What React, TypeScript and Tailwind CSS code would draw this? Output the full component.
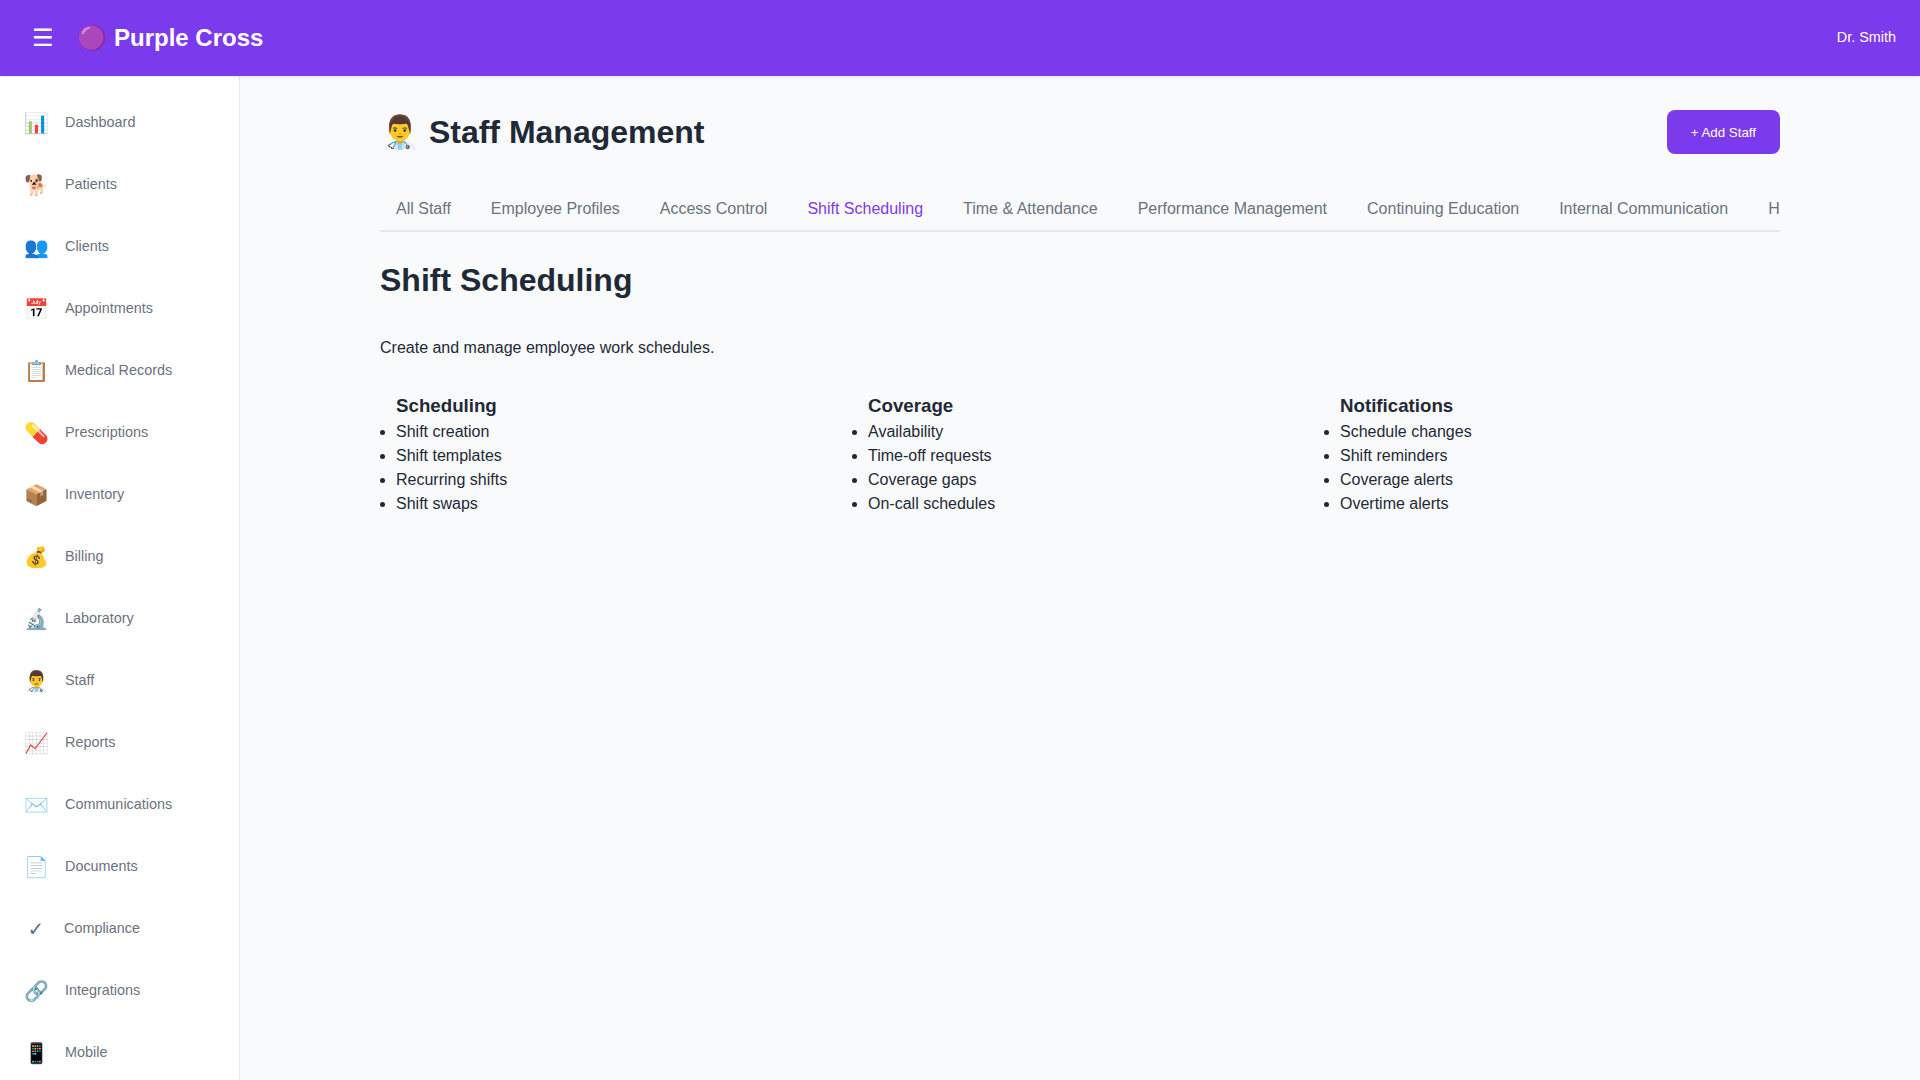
const nav: [string, string][] = [
  ['📊', 'Dashboard'], ['🐕', 'Patients'], ['👥', 'Clients'], ['📅', 'Appointments'],
  ['📋', 'Medical Records'], ['💊', 'Prescriptions'], ['📦', 'Inventory'], ['💰', 'Billing'],
  ['🔬', 'Laboratory'], ['👨‍⚕️', 'Staff'], ['📈', 'Reports'], ['✉️', 'Communications'],
  ['📄', 'Documents'], ['✓', 'Compliance'], ['🔗', 'Integrations'], ['📱', 'Mobile'],
];
const tabs = ['All Staff', 'Employee Profiles', 'Access Control', 'Shift Scheduling', 'Time & Attendance', 'Performance Management', 'Continuing Education', 'Internal Communication', 'HR Management'];
const groups = [
  { title: 'Scheduling', items: ['Shift creation', 'Shift templates', 'Recurring shifts', 'Shift swaps'] },
  { title: 'Coverage', items: ['Availability', 'Time-off requests', 'Coverage gaps', 'On-call schedules'] },
  { title: 'Notifications', items: ['Schedule changes', 'Shift reminders', 'Coverage alerts', 'Overtime alerts'] },
];

export default function App() {
  return (
    <div className="flex h-screen flex-col overflow-hidden bg-[#f9fafb] font-['Liberation_Sans',sans-serif] text-base text-[#1f2937]">
      <header className="relative z-10 flex h-[76px] shrink-0 items-center justify-between bg-[#7c3aed] px-6 text-white shadow-[0_1px_3px_rgba(0,0,0,0.1)]">
        <div className="flex items-center gap-4">
          <button className="p-2 font-['DejaVu_Sans',sans-serif] text-2xl leading-7">☰</button>
          <h1 className="-ml-[0.7px] text-2xl font-bold">🟣<span className="ml-[0.5px]"> Purple Cross</span></h1>
        </div>
        <span className="text-[14.4px] leading-[1.5]">Dr. Smith</span>
      </header>
      <div className="flex min-h-0 flex-1">
        <aside className="w-60 shrink-0 overflow-hidden border-r border-[#e5e7eb] bg-white pt-4">
          {nav.map(([icon, label]) => (
            <a key={label} className="flex h-[62px] items-center gap-4 px-6 text-[#6b7280]">
              <span className={icon === '✓' ? "w-6 text-center font-['DejaVu_Sans',sans-serif] text-xl leading-[30px]" : 'min-w-6 text-center text-xl leading-[30px]'}>{icon}</span>
              <span className="text-[14.4px] leading-[1.5]">{label}</span>
            </a>
          ))}
        </aside>
        <main className="min-w-0 flex-1 p-8">
          <div className="mx-auto max-w-[1400px]">
            <div className="flex items-center justify-between">
              <h1 className="text-[32px] font-bold">👨‍⚕️ Staff Management</h1>
              <button className="h-11 rounded-lg bg-[#7c3aed] px-6 text-[13.333px] leading-[15px] text-white">+ Add Staff</button>
            </div>
            <nav className="mt-8 flex gap-2 overflow-hidden border-b-2 border-[#e5e7eb]">
              {tabs.map((t) => (
                <a key={t} className={`shrink-0 px-4 py-3 leading-[18px] whitespace-nowrap ${t === 'Shift Scheduling' ? 'text-[#7c3aed]' : 'text-[#6b7280]'}`}>{t}</a>
              ))}
            </nav>
            <h1 className="mt-6 text-[32px] font-bold">Shift Scheduling</h1>
            <p className="mt-8">Create and manage employee work schedules.</p>
            <div className="mt-8 grid grid-cols-3 gap-4">
              {groups.map((g) => (
                <ul key={g.title} className="list-disc pl-4">
                  <h3 className="text-[18.72px] font-bold">{g.title}</h3>
                  {g.items.map((i) => <li key={i}>{i}</li>)}
                </ul>
              ))}
            </div>
          </div>
        </main>
      </div>
    </div>
  );
}
